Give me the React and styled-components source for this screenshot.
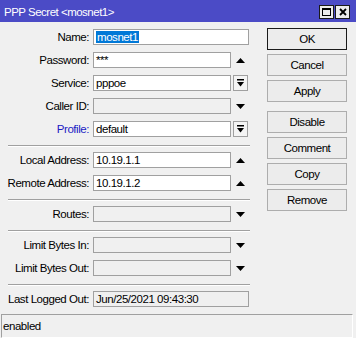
import styled, { createGlobalStyle } from "styled-components";

const GlobalStyle = createGlobalStyle`
  body {
    margin: 0;
    background: #f0f0f0;
    font-family: "Liberation Sans", Arial, sans-serif;
    font-size: 11.5px;
    letter-spacing: -0.45px;
    color: #000;
  }
`;

const Window = styled.div`
  width: 356px;
  height: 338px;
  display: flex;
  flex-direction: column;
  background: #f0f0f0;
  overflow: hidden;
`;

const TitleBar = styled.div`
  height: 22px;
  flex: none;
  display: flex;
  align-items: center;
  padding: 0 6px 0 4px;
  background: #4b4bc6;
  color: #fff;
  font-size: 11.5px;
  letter-spacing: -0.5px;
`;

const TitleText = styled.div`
  flex: 1;
  padding-top: 1px;
`;

const TitleButtons = styled.div`
  display: flex;
  gap: 1px;
  margin-top: 2px;
`;

const TitleButton = styled.div`
  width: 13px;
  height: 12px;
  background: #ececec;
  border: 1px solid #1a1a1a;
  display: flex;
  align-items: center;
  justify-content: center;
`;

const Body = styled.div`
  flex: 1;
  display: flex;
`;

const Form = styled.div`
  width: 258px;
  display: flex;
  flex-direction: column;
`;

const Section = styled.div`
  display: flex;
  flex-direction: column;
  gap: 7px;
  padding: ${(p) => (p.$first ? "7px" : "5px")} 0 ${(p) => (p.$last ? "7px" : "8px")};
`;

const Separator = styled.div`
  height: 1px;
  margin: 0 8px;
  background: #a0a0a0;
  border-bottom: 1px solid #fff;
`;

const Row = styled.div`
  display: flex;
  align-items: center;
  height: 16px;
`;

const Label = styled.div`
  width: 89px;
  margin-right: 4px;
  text-align: right;
  white-space: nowrap;
  color: ${(p) => (p.$link ? "#1c1cc4" : "#000")};
`;

const Field = styled.div`
  box-sizing: border-box;
  width: ${(p) => (p.$wide ? "156px" : "138px")};
  height: 16px;
  border: 1px solid #a0a0a0;
  background: ${(p) => (p.$readonly ? "#f0f0f0" : "#fff")};
  padding: 0 2px;
  line-height: 14px;
  white-space: nowrap;
  overflow: hidden;
`;

const Selected = styled.span`
  background: #0078d7;
  color: #fff;
  padding: 0 1px;
`;

const Side = styled.div`
  width: 15px;
  height: 16px;
  margin-left: 2px;
  display: flex;
  align-items: center;
  justify-content: center;
`;

const DropButton = styled(Side)`
  box-sizing: border-box;
  border: 1px solid #a0a0a0;
  background: #f4f4f4;
`;

const Buttons = styled.div`
  margin-left: 9px;
  width: 80px;
  padding-top: 6px;
  display: flex;
  flex-direction: column;
  gap: 4px;
`;

const Button = styled.div`
  box-sizing: border-box;
  height: 22px;
  display: flex;
  align-items: center;
  justify-content: center;
  background: #ececec;
  border: 1px solid ${(p) => (p.$default ? "#1a1a1a" : "#adadad")};
  margin-top: ${(p) => (p.$spaced ? "5px" : "0")};
`;

const StatusBar = styled.div`
  box-sizing: border-box;
  height: 24px;
  flex: none;
  margin: 0 3px 0 1px;
  border-top: 1px solid #a0a0a0;
  border-left: 1px solid #a0a0a0;
  border-right: 1px solid #fff;
  border-bottom: 1px solid #fff;
  display: flex;
  align-items: center;
  padding-left: 1px;
`;

const Up = () => (
  <svg width="9" height="5" viewBox="0 0 9 5">
    <polygon points="0,5 9,5 4.5,0" fill="#000" />
  </svg>
);

const Down = () => (
  <svg width="9" height="5" viewBox="0 0 9 5">
    <polygon points="0,0 9,0 4.5,5" fill="#000" />
  </svg>
);

const Drop = () => (
  <svg width="7" height="8" viewBox="0 0 7 8">
    <rect x="0" y="0" width="7" height="1.5" fill="#000" />
    <polygon points="0,3 7,3 3.5,7.5" fill="#000" />
  </svg>
);

const sideIcon = (kind) => {
  if (kind === "up") return <Side><Up /></Side>;
  if (kind === "down") return <Side><Down /></Side>;
  if (kind === "drop") return <DropButton><Drop /></DropButton>;
  return <Side />;
};

const FormRow = ({ label, value, kind, readonly, link }) => (
  <Row>
    <Label $link={link}>{label}:</Label>
    <Field $readonly={readonly}>{value}</Field>
    {sideIcon(kind)}
  </Row>
);

function App() {
  return (
    <Window>
      <GlobalStyle />
      <TitleBar>
        <TitleText>PPP Secret &lt;mosnet1&gt;</TitleText>
        <TitleButtons>
          <TitleButton>
            <svg width="9" height="8" viewBox="0 0 9 8">
              <rect x="0.5" y="0.5" width="8" height="7" fill="none" stroke="#000" />
              <rect x="0" y="0" width="9" height="2" fill="#000" />
            </svg>
          </TitleButton>
          <TitleButton>
            <svg width="8" height="8" viewBox="0 0 8 8">
              <path d="M1 1 L7 7 M7 1 L1 7" stroke="#000" strokeWidth="1.8" />
            </svg>
          </TitleButton>
        </TitleButtons>
      </TitleBar>
      <Body>
        <Form>
          <Section $first>
            <Row>
              <Label>Name:</Label>
              <Field $wide>
                <Selected>mosnet1</Selected>
              </Field>
            </Row>
            <FormRow label="Password" value="***" kind="up" />
            <FormRow label="Service" value="pppoe" kind="drop" />
            <FormRow label="Caller ID" value="" kind="down" readonly />
            <FormRow label="Profile" value="default" kind="drop" link />
          </Section>
          <Separator />
          <Section>
            <FormRow label="Local Address" value="10.19.1.1" kind="up" />
            <FormRow label="Remote Address" value="10.19.1.2" kind="up" />
          </Section>
          <Separator />
          <Section>
            <FormRow label="Routes" value="" kind="down" readonly />
          </Section>
          <Separator />
          <Section>
            <FormRow label="Limit Bytes In" value="" kind="down" readonly />
            <FormRow label="Limit Bytes Out" value="" kind="down" readonly />
          </Section>
          <Separator />
          <Section $last>
            <Row>
              <Label>Last Logged Out:</Label>
              <Field $wide $readonly>Jun/25/2021 09:43:30</Field>
            </Row>
          </Section>
        </Form>
        <Buttons>
          <Button $default>OK</Button>
          <Button>Cancel</Button>
          <Button>Apply</Button>
          <Button $spaced>Disable</Button>
          <Button>Comment</Button>
          <Button>Copy</Button>
          <Button>Remove</Button>
        </Buttons>
      </Body>
      <StatusBar>enabled</StatusBar>
    </Window>
  );
}

export default App;
